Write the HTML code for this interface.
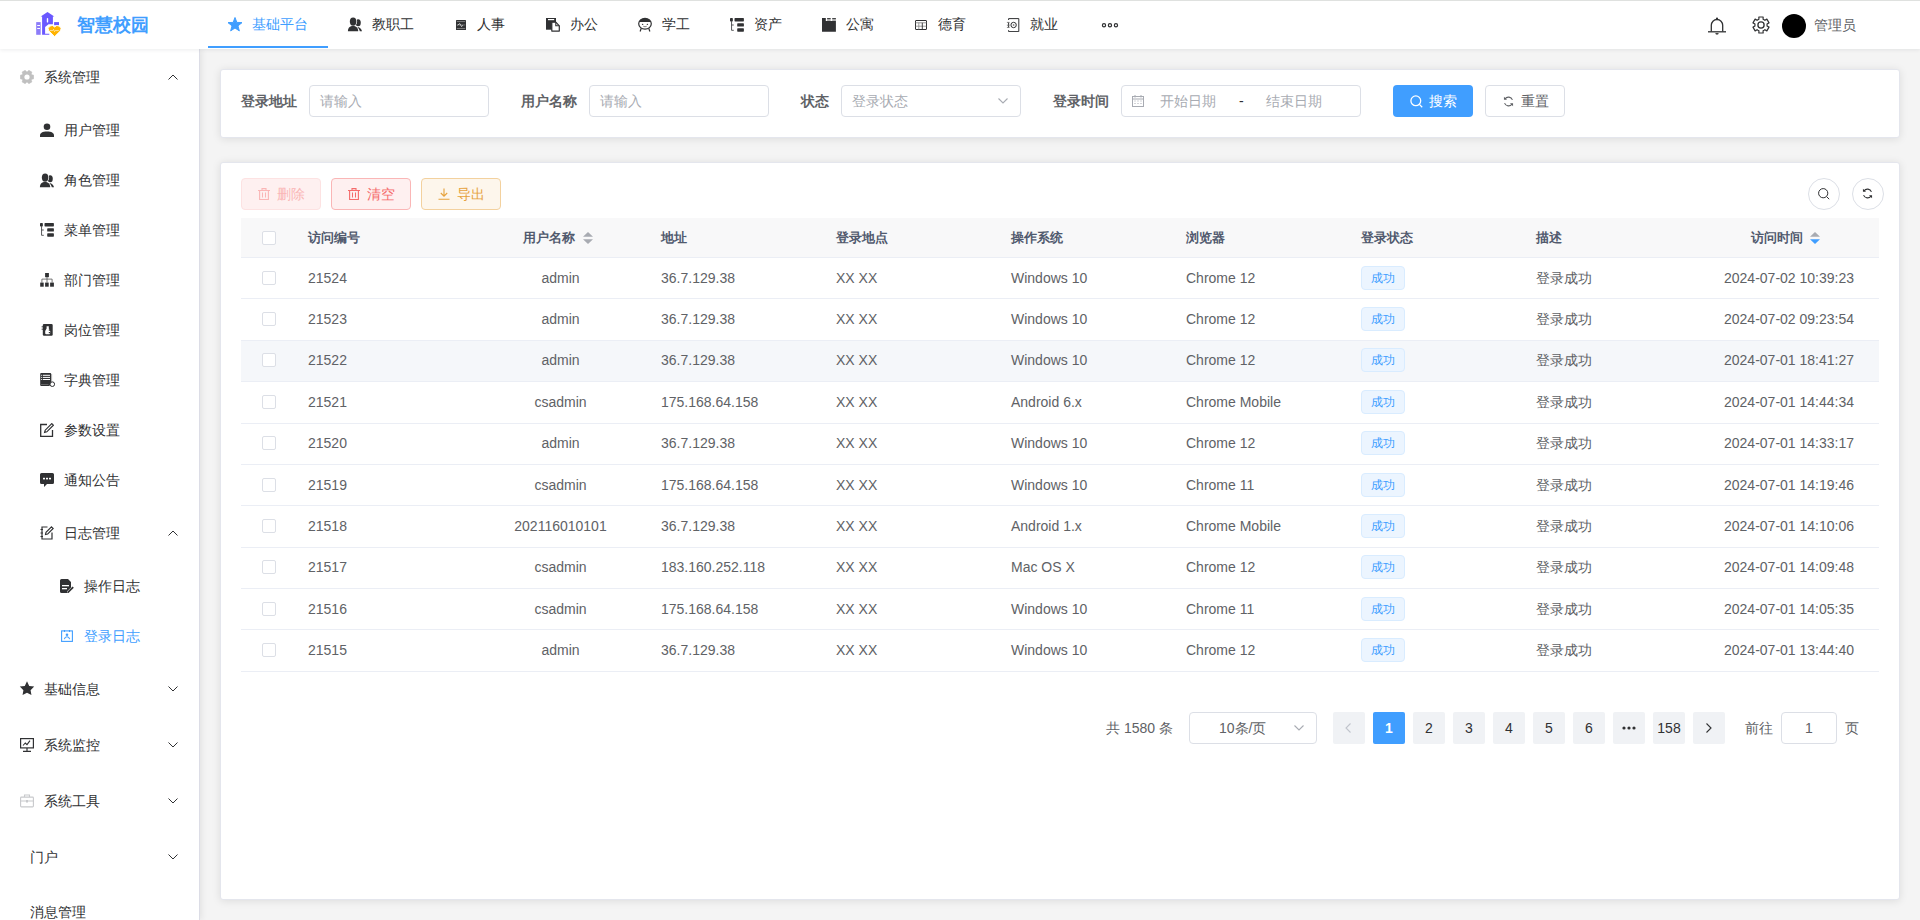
<!DOCTYPE html>
<html><head><meta charset="utf-8">
<style>
*{box-sizing:border-box;margin:0;padding:0}
html,body{width:1920px;height:920px;overflow:hidden}
body{font-family:"Liberation Sans",sans-serif;font-size:14px;color:#606266;background:#f4f4f4;position:relative}
svg{position:absolute;display:block}
#header{position:absolute;left:0;top:0;width:1920px;height:49px;background:#fff;box-shadow:0 1px 4px rgba(0,21,41,.08);z-index:3;border-top:1px solid #dfe1df}
#sidebar{position:absolute;left:0;top:49px;width:200px;height:871px;background:#fff;z-index:2;border-right:1px solid #dcdde6;box-shadow:2px 0 6px rgba(0,0,0,.07)}
.card{position:absolute;background:#fff;border-radius:4px;box-shadow:0 0 8px rgba(0,0,0,.10)}
.t{position:absolute;white-space:nowrap;line-height:14px;height:14px}
.nav{color:#303133}
.sb{color:#303133}
</style></head><body>
<div id="header">
  <!-- logo -->
  <svg style="left:32px;top:7px" width="32" height="32" viewBox="0 0 32 32">
    <rect x="4.2" y="14.1" width="4.5" height="12.7" fill="#8c7cf9"/>
    <rect x="5.2" y="17" width="2.8" height="1" fill="#fff"/><rect x="5.2" y="20" width="2.8" height="1" fill="#fff"/>
    <path d="M10.1 26.8V8.5H8.7L15.5 4l6.8 4.5h-1.4v7.8h-4.3l-3.5 2.7v6.7h4.2v1.1z" fill="#6a58ff"/>
    <rect x="14.8" y="10" width="1.4" height="4.6" rx=".7" fill="#fff"/>
    <rect x="22.1" y="14.1" width="4.9" height="3.1" fill="#6a58ff"/>
    <path d="M22.6 28.6l-5.6-5.5a3.3 3.3 0 0 1 5.6-4.1a3.3 3.3 0 0 1 5.6 4.1z" fill="#ffb300" stroke="#fff" stroke-width=".9"/>
    <path d="M18 22.6h2.6l.9-1.2 1 2.2.8-1h3.5" stroke="#fff" stroke-width=".6" fill="none"/>
  </svg>
  <div class="t" style="left:77px;top:15px;font-size:18px;line-height:18px;height:18px;font-weight:bold;color:#409eff">智慧校园</div>
  <!-- nav -->
  <div style="position:absolute;left:208px;top:45px;width:120px;height:2px;background:#409eff"></div>
  <svg style="left:228px;top:16px" width="14" height="15" viewBox="0 0 14 15"><path d="M7.00 0.50L8.83 5.39L14.04 5.61L9.96 8.86L11.35 13.89L7.00 11.01L2.65 13.89L4.04 8.86L-0.04 5.61L5.17 5.39z" fill="#409eff" stroke="#409eff" stroke-width="1" stroke-linejoin="round"/></svg>
  <div class="t" style="left:252px;top:16px;color:#409eff">基础平台</div>
  <svg style="left:348px;top:15.5px" width="15" height="15" viewBox="0 0 15 15" overflow="visible"><ellipse cx="10.2" cy="5.8" rx="2.6" ry="3.5" fill="#303133"/><path d="M9.6 9.9c2.4.4 4 1.9 4.4 4.3h-2.2c-.4-1.7-1.3-2.9-2.6-3.4z" fill="#303133"/><ellipse cx="5.1" cy="4.6" rx="4" ry="4.9" fill="#fff"/><path d="M-.9 14.6C-.9 10.6 1.8 8.5 5 8.5s6.1 2.1 6.1 6.1z" fill="#fff"/><ellipse cx="5.1" cy="4.6" rx="3.25" ry="4.2" fill="#303133"/><path d="M-.1 14.2C-.1 11 2 9.1 5 9.1s5.2 1.9 5.2 5.1z" fill="#303133"/></svg>
  <div class="t nav" style="left:372px;top:16px">教职工</div>
  <svg style="left:456px;top:18.8px" width="10" height="10" viewBox="0 0 10 10"><rect x="0" y="0" width="10" height="10" rx=".6" fill="#303133"/><rect x=".8" y="1.3" width="8.4" height=".6" fill="#aaa"/><rect x=".8" y="8.1" width="8.4" height=".6" fill="#aaa"/><rect x=".8" y="4.6" width="8.4" height=".7" fill="#888"/><path d="M1.5 5.2L3.8 3.6l1.8 3 1.3-1.4" fill="none" stroke="#fff" stroke-width=".7"/></svg>
  <div class="t nav" style="left:477px;top:16px">人事</div>
  <svg style="left:546px;top:16px" width="15" height="15" viewBox="0 0 15 15"><rect x="0" y="1" width="10" height="11.7" fill="#303133"/><rect x="2" y="2" width="6.2" height="1.2" fill="#fff"/><path d="M5.8 5.2h4l3.5 3.6v5.3H5.8z" fill="#fff" stroke="#303133" stroke-width="1.2" stroke-linejoin="round"/><path d="M9.8 5.2v3.6h3.5" fill="none" stroke="#303133" stroke-width="1.1"/></svg>
  <div class="t nav" style="left:570px;top:16px">办公</div>
  <svg style="left:638px;top:16px" width="14" height="15" viewBox="0 0 14 15"><ellipse cx="7" cy="6.8" rx="6.3" ry="5.4" fill="none" stroke="#303133" stroke-width="1.2"/><path d="M1 5.1C1.9 2.4 4.3 1.4 7 1.4s5.1 1 6 3.7z" fill="#303133"/><ellipse cx="4.6" cy="7.3" rx=".75" ry=".6" fill="#303133"/><ellipse cx="9.4" cy="7.3" rx=".75" ry=".6" fill="#303133"/><path d="M5.3 9.3q1.7 .9 3.4 0" fill="none" stroke="#777" stroke-width=".9"/><path d="M3.3 11.3L2.1 14.5M10.7 11.3l1.2 3.2" stroke="#303133" stroke-width="1.2"/></svg>
  <div class="t nav" style="left:662px;top:16px">学工</div>
  <svg style="left:730px;top:16px" width="14" height="15" viewBox="0 0 14 15"><rect x="0" y="1" width="2.85" height="3.4" rx=".7" fill="#303133"/><path d="M1.55 4.2v9.1H3.8M1.55 8h2.2" fill="none" stroke="#303133" stroke-width=".8"/><rect x="4.5" y="1.1" width="9.4" height="3.3" rx=".6" fill="#303133"/><rect x="7.2" y="6.3" width="6.7" height="3.3" rx=".6" fill="#303133"/><rect x="7.2" y="11.3" width="6.7" height="3.4" rx=".6" fill="#303133"/></svg>
  <div class="t nav" style="left:754px;top:16px">资产</div>
  <svg style="left:822px;top:16px" width="14" height="15" viewBox="0 0 14 15"><path d="M0 1.1H3.8V4.1H13.9V14.7H0z" fill="#303133"/><rect x="5.1" y="1.1" width="3.6" height=".9" fill="#303133"/><rect x="10.2" y="1.1" width="3.7" height=".9" fill="#303133"/><rect x="5.1" y="2" width="3.6" height="1.9" fill="#aaa"/><rect x="10.2" y="2" width="3.7" height="1.9" fill="#aaa"/></svg>
  <div class="t nav" style="left:846px;top:16px">公寓</div>
  <svg style="left:915px;top:18.8px" width="12" height="10" viewBox="0 0 12 10"><rect x=".5" y=".5" width="11" height="9" rx=".4" fill="none" stroke="#303133" stroke-width="1"/><path d="M.5 2.8h11" stroke="#888" stroke-width=".9"/><path d="M.5 6.2h11" stroke="#777" stroke-width=".7"/><path d="M3.8 2.8v6.7" stroke="#888" stroke-width=".8"/><path d="M7.3 2.8v6.7" stroke="#303133" stroke-width=".9"/></svg>
  <div class="t nav" style="left:938px;top:16px">德育</div>
  <svg style="left:1006px;top:16px" width="14" height="15" viewBox="0 0 14 15"><path d="M2.6 3V1.6h10.2v13H2.6v-1.4M2.6 5.5v5" fill="none" stroke="#303133" stroke-width="1"/><path d="M.9 5.4h2.7M.9 8.2h2.7M.9 10.4h2.7" stroke="#666" stroke-width=".8"/><circle cx="7.6" cy="8" r="2.7" fill="none" stroke="#303133" stroke-width="1"/><circle cx="7.6" cy="8" r=".9" fill="#888"/></svg>
  <div class="t nav" style="left:1030px;top:16px">就业</div>
  <svg style="left:1101px;top:21px" width="18" height="6" viewBox="0 0 18 6"><circle cx="3" cy="3.2" r="1.6" fill="none" stroke="#303133" stroke-width="1.2"/><circle cx="8.95" cy="3.2" r="1.6" fill="none" stroke="#303133" stroke-width="1.2"/><circle cx="14.95" cy="3.2" r="1.6" fill="none" stroke="#303133" stroke-width="1.2"/></svg>
  <!-- right -->
  <svg style="left:1708px;top:15px" width="18" height="20" viewBox="0 0 18 20"><path d="M3.3 15.5V9.2a5.7 5.7 0 0 1 11.4 0v6.3" fill="none" stroke="#303133" stroke-width="1.3"/><path d="M0 15.8h18" stroke="#303133" stroke-width="1.3"/><circle cx="9" cy="2.6" r="1.1" fill="#303133"/><path d="M7.3 17h3.4a1.7 1.7 0 0 1-3.4 0z" fill="#444"/></svg>
  <svg style="left:1752px;top:15px" width="18" height="18" viewBox="0 0 18 18"><path d="M5.95 3.72L6.91 3.27L6.85 0.98L11.15 0.98L11.09 3.27L12.05 3.72L12.92 4.33L14.87 3.13L17.02 6.85L15.01 7.94L15.10 9.00L15.01 10.06L17.02 11.15L14.87 14.87L12.92 13.67L12.05 14.28L11.09 14.73L11.15 17.02L6.85 17.02L6.91 14.73L5.95 14.28L5.08 13.67L3.13 14.87L0.98 11.15L2.99 10.06L2.90 9.00L2.99 7.94L0.98 6.85L3.13 3.13L5.08 4.33z" fill="none" stroke="#303133" stroke-width="1.2" stroke-linejoin="round"/><circle cx="9" cy="9" r="3.1" fill="none" stroke="#303133" stroke-width="1.3"/></svg>
  <div style="position:absolute;left:1782px;top:13px;width:24px;height:24px;border-radius:50%;background:#000"></div>
  <div class="t" style="left:1814px;top:17px;color:#606266">管理员</div>
</div>
<div id="sidebar">
<svg style="left:20px;top:21px" width="14" height="14" viewBox="0 0 14 14"><path d="M11.59 4.35L11.84 4.84L13.66 5.21L13.66 8.79L11.84 9.16L11.59 9.65L11.29 10.12L11.88 11.88L8.79 13.66L7.55 12.27L7.00 12.30L6.45 12.27L5.21 13.66L2.12 11.88L2.71 10.12L2.41 9.65L2.16 9.16L0.34 8.79L0.34 5.21L2.16 4.84L2.41 4.35L2.71 3.88L2.12 2.12L5.21 0.34L6.45 1.73L7.00 1.70L7.55 1.73L8.79 0.34L11.88 2.12L11.29 3.88z" fill="#c0c0c0" stroke="#c0c0c0" stroke-width=".6" stroke-linejoin="round"/><circle cx="7" cy="7" r="2.6" fill="#fff"/></svg>
<div class="t" style="left:44px;top:21.0px;font-size:14px;line-height:14px;height:14px;color:#303133">系统管理</div>
<svg style="left:168px;top:25px" width="10" height="6" viewBox="0 0 10 6"><path d="M.5 5.5L5 1l4.5 4.5" fill="none" stroke="#303133" stroke-width="1"/></svg>
<svg style="left:40px;top:74px" width="14" height="14" viewBox="0 0 14 14" fill="#303133"><circle cx="7" cy="3.8" r="3.3"/><path d="M0 14v-1.5C0 10 2.5 8.5 7 8.5s7 1.5 7 4V14z"/></svg>
<div class="t" style="left:64px;top:74.0px;font-size:14px;line-height:14px;height:14px;color:#303133">用户管理</div>
<svg style="left:40px;top:124px" width="15" height="15" viewBox="0 0 15 15" overflow="visible"><ellipse cx="10.2" cy="5.8" rx="2.6" ry="3.5" fill="#303133"/><path d="M9.6 9.9c2.4.4 4 1.9 4.4 4.3h-2.2c-.4-1.7-1.3-2.9-2.6-3.4z" fill="#303133"/><ellipse cx="5.1" cy="4.6" rx="4" ry="4.9" fill="#fff"/><path d="M-.9 14.6C-.9 10.6 1.8 8.5 5 8.5s6.1 2.1 6.1 6.1z" fill="#fff"/><ellipse cx="5.1" cy="4.6" rx="3.25" ry="4.2" fill="#303133"/><path d="M-.1 14.2C-.1 11 2 9.1 5 9.1s5.2 1.9 5.2 5.1z" fill="#303133"/></svg>
<div class="t" style="left:64px;top:124.0px;font-size:14px;line-height:14px;height:14px;color:#303133">角色管理</div>
<svg style="left:40px;top:173px" width="14" height="15" viewBox="0 0 14 15"><rect x="0" y="1" width="2.85" height="3.4" rx=".7" fill="#303133"/><path d="M1.55 4.2v9.1H3.8M1.55 8h2.2" fill="none" stroke="#303133" stroke-width=".8"/><rect x="4.5" y="1.1" width="9.4" height="3.3" rx=".6" fill="#303133"/><rect x="7.2" y="6.3" width="6.7" height="3.3" rx=".6" fill="#303133"/><rect x="7.2" y="11.3" width="6.7" height="3.4" rx=".6" fill="#303133"/></svg>
<div class="t" style="left:64px;top:174.0px;font-size:14px;line-height:14px;height:14px;color:#303133">菜单管理</div>
<svg style="left:40px;top:224px" width="14" height="14" viewBox="0 0 14 14"><rect x="5.1" y="0" width="3.8" height="4.2" fill="#303133"/><path d="M7 4v2.1M1.9 9.6V6.1h10.2v3.5M7 6.1v3.5" fill="none" stroke="#555" stroke-width=".8"/><rect x="0.2" y="9.6" width="3.5" height="4.1" fill="#303133"/><rect x="5.1" y="9.6" width="3.6" height="4.1" fill="#303133"/><rect x="10.1" y="9.6" width="3.8" height="4.1" fill="#303133"/></svg>
<div class="t" style="left:64px;top:224.0px;font-size:14px;line-height:14px;height:14px;color:#303133">部门管理</div>
<svg style="left:40px;top:274px" width="14" height="14" viewBox="0 0 14 14"><rect x="2.8" y=".9" width="9.9" height="11.9" rx="1.2" fill="#303133"/><path d="M1.6 3.8h1.8M1.6 6.2h1.8" stroke="#303133" stroke-width=".9"/><path d="M6.6 3.2h2.2v2.4l1.4 2.4v2.2a1 1 0 0 1-1 1H6.2a1 1 0 0 1-1-1V8l1.4-2.4z" fill="#fff"/><path d="M8.8 6.5h1.4v1.2H8.8zM8.8 9h1.4v1.2H8.8z" fill="#303133"/></svg>
<div class="t" style="left:64px;top:274.0px;font-size:14px;line-height:14px;height:14px;color:#303133">岗位管理</div>
<svg style="left:40px;top:324px" width="15" height="14" viewBox="0 0 15 14"><path d="M.2 1a1 1 0 0 1 1-1h9a1 1 0 0 1 1 1v9.6a3 3 0 0 0-1.7 2.4H1.2a1 1 0 0 1-1-1z" fill="#303133"/><rect x="11.2" y="1" width=".9" height="8.5" fill="#aaa"/><rect x="1.2" y="1.8" width="1" height="1" fill="#fff"/><rect x="3" y="1.8" width="7" height="1" fill="#fff"/><rect x="1.2" y="3.9" width="1" height="1" fill="#fff"/><rect x="3" y="3.9" width="7" height="1" fill="#fff"/><rect x="1.2" y="6" width="1" height="1" fill="#fff"/><rect x="3" y="6" width="7" height="1" fill="#fff"/><rect x="1" y="11.4" width="7.5" height=".6" fill="#888"/><circle cx="12.3" cy="11.2" r="2.3" fill="#fff" stroke="#303133" stroke-width="1"/></svg>
<div class="t" style="left:64px;top:324.0px;font-size:14px;line-height:14px;height:14px;color:#303133">字典管理</div>
<svg style="left:40px;top:374px" width="14" height="14" viewBox="0 0 14 14" fill="#303133"><path d="M7 1.5H.7v11.8h11.8V7" fill="none" stroke="#303133" stroke-width="1.3"/><path d="M11.8.6l1.6 1.6-6.6 6.6-2.2.6.6-2.2z" fill="none" stroke="#303133" stroke-width="1.2"/></svg>
<div class="t" style="left:64px;top:374.0px;font-size:14px;line-height:14px;height:14px;color:#303133">参数设置</div>
<svg style="left:40px;top:424px" width="14" height="14" viewBox="0 0 14 14" fill="#303133"><path d="M0 1.5A1.5 1.5 0 0 1 1.5 0h11A1.5 1.5 0 0 1 14 1.5v8a1.5 1.5 0 0 1-1.5 1.5H7L4 14v-3H1.5A1.5 1.5 0 0 1 0 9.5z"/><rect x="3" y="4.8" width="2" height="1.6" fill="#fff"/><rect x="6" y="4.8" width="2" height="1.6" fill="#fff"/><rect x="9" y="4.8" width="2" height="1.6" fill="#fff"/></svg>
<div class="t" style="left:64px;top:424.0px;font-size:14px;line-height:14px;height:14px;color:#303133">通知公告</div>
<svg style="left:40px;top:477px" width="14" height="14" viewBox="0 0 14 14"><path d="M7.5 1H2v12h10V6.5" fill="none" stroke="#303133" stroke-width="1.2"/><path d="M0.5 3.5h2.5M.5 7h2.5M.5 10.5h2.5" stroke="#303133" stroke-width="1"/><path d="M11.5.8l1.7 1.7-5.5 5.5-2.2.5.5-2.2z" fill="none" stroke="#303133" stroke-width="1.1"/></svg>
<div class="t" style="left:64px;top:477.0px;font-size:14px;line-height:14px;height:14px;color:#303133">日志管理</div>
<svg style="left:168px;top:481px" width="10" height="6" viewBox="0 0 10 6"><path d="M.5 5.5L5 1l4.5 4.5" fill="none" stroke="#303133" stroke-width="1"/></svg>
<svg style="left:60px;top:530px" width="14" height="14" viewBox="0 0 14 14" fill="#303133"><path d="M0 1.5A1.5 1.5 0 0 1 1.5 0H8l3 3v5.5L7 12.5V14H1.5A1.5 1.5 0 0 1 0 12.5z"/><rect x="2" y="6" width="7" height="1.3" fill="#fff"/><rect x="2" y="9" width="5" height="1.3" fill="#fff"/><path d="M12.6 7.5l1.2 1.2-5.3 5.3H7.3v-1.2z"/></svg>
<div class="t" style="left:84px;top:530.0px;font-size:14px;line-height:14px;height:14px;color:#303133">操作日志</div>
<svg style="left:61px;top:581px" width="12" height="12" viewBox="0 0 12 12"><rect x=".6" y=".9" width="10.8" height="10.5" fill="none" stroke="#409eff" stroke-width="1.1"/><path d="M3.5 0v2M8.5 0v2" stroke="#409eff" stroke-width="1.1"/><circle cx="6" cy="4.8" r="1.3" fill="#409eff"/><path d="M3.3 9.2C3.8 7.5 4.8 6.8 6 6.8s2.2.7 2.7 2.4" fill="none" stroke="#409eff" stroke-width="1.1"/></svg>
<div class="t" style="left:84px;top:580.0px;font-size:14px;line-height:14px;height:14px;color:#409eff">登录日志</div>
<svg style="left:19px;top:632px" width="16" height="15" viewBox="0 0 24 23"><path d="M12 .5l3.4 7 7.6 1.1-5.5 5.4 1.3 7.6L12 18l-6.8 3.6 1.3-7.6L1 8.6l7.6-1.1z" fill="#303133"/></svg>
<div class="t" style="left:44px;top:633.0px;font-size:14px;line-height:14px;height:14px;color:#303133">基础信息</div>
<svg style="left:168px;top:637px" width="10" height="6" viewBox="0 0 10 6"><path d="M.5 .5L5 5l4.5-4.5" fill="none" stroke="#303133" stroke-width="1"/></svg>
<svg style="left:20px;top:689px" width="14" height="14" viewBox="0 0 14 14"><rect x=".6" y=".6" width="12.8" height="9.3" fill="none" stroke="#303133" stroke-width="1.2"/><path d="M7 10v3.5M3 13.4h8" stroke="#303133" stroke-width="1.2"/><path d="M3 7.5l2.3-2.5 1.7 1.7 3-4" fill="none" stroke="#303133" stroke-width="1.1"/></svg>
<div class="t" style="left:44px;top:689.0px;font-size:14px;line-height:14px;height:14px;color:#303133">系统监控</div>
<svg style="left:168px;top:693px" width="10" height="6" viewBox="0 0 10 6"><path d="M.5 .5L5 5l4.5-4.5" fill="none" stroke="#303133" stroke-width="1"/></svg>
<svg style="left:20px;top:745px" width="14" height="14" viewBox="0 0 14 14"><rect x=".6" y="3.1" width="12.8" height="9.8" rx=".8" fill="none" stroke="#c8c9cc" stroke-width="1.1"/><path d="M4.5 3V1h5v2M.6 7h12.8" fill="none" stroke="#c8c9cc" stroke-width="1.1"/><rect x="6" y="6" width="2" height="2.5" fill="#c8c9cc"/></svg>
<div class="t" style="left:44px;top:745.0px;font-size:14px;line-height:14px;height:14px;color:#303133">系统工具</div>
<svg style="left:168px;top:749px" width="10" height="6" viewBox="0 0 10 6"><path d="M.5 .5L5 5l4.5-4.5" fill="none" stroke="#303133" stroke-width="1"/></svg>
<div class="t" style="left:30px;top:801.0px;font-size:14px;line-height:14px;height:14px;color:#303133">门户</div>
<svg style="left:168px;top:805px" width="10" height="6" viewBox="0 0 10 6"><path d="M.5 .5L5 5l4.5-4.5" fill="none" stroke="#303133" stroke-width="1"/></svg>
<div class="t" style="left:30px;top:856.0px;font-size:14px;line-height:14px;height:14px;color:#303133">消息管理</div>
</div>
<div style="position:absolute;left:220px;top:69px;width:1680px;height:69px;background:#fff;border:1px solid #e4e6ed;border-radius:3px;box-shadow:0 1px 9px rgba(0,0,0,.1)"></div>
<div class="t" style="left:241px;top:94.0px;font-size:14px;line-height:14px;height:14px;color:#606266;font-weight:bold">登录地址</div>
<div style="position:absolute;left:309px;top:85px;width:180px;height:32px;border:1px solid #dcdfe6;border-radius:4px;background:#fff"></div>
<div class="t" style="left:320px;top:94.0px;font-size:14px;line-height:14px;height:14px;color:#a8abb2">请输入</div>
<div class="t" style="left:521px;top:94.0px;font-size:14px;line-height:14px;height:14px;color:#606266;font-weight:bold">用户名称</div>
<div style="position:absolute;left:589px;top:85px;width:180px;height:32px;border:1px solid #dcdfe6;border-radius:4px;background:#fff"></div>
<div class="t" style="left:600px;top:94.0px;font-size:14px;line-height:14px;height:14px;color:#a8abb2">请输入</div>
<div class="t" style="left:801px;top:94.0px;font-size:14px;line-height:14px;height:14px;color:#606266;font-weight:bold">状态</div>
<div style="position:absolute;left:841px;top:85px;width:180px;height:32px;border:1px solid #dcdfe6;border-radius:4px;background:#fff"></div>
<div class="t" style="left:852px;top:94.0px;font-size:14px;line-height:14px;height:14px;color:#a8abb2">登录状态</div>
<svg style="left:998px;top:98px" width="10" height="6" viewBox="0 0 10 6"><path d="M.5 .5L5 5l4.5-4.5" fill="none" stroke="#a8abb2" stroke-width="1.1"/></svg>
<div class="t" style="left:1053px;top:94.0px;font-size:14px;line-height:14px;height:14px;color:#606266;font-weight:bold">登录时间</div>
<div style="position:absolute;left:1121px;top:85px;width:240px;height:32px;border:1px solid #dcdfe6;border-radius:4px;background:#fff"></div>
<svg style="left:1132px;top:95px" width="12" height="12" viewBox="0 0 12 12"><rect x=".5" y="1.5" width="11" height="10" fill="none" stroke="#a8abb2" stroke-width="1"/><path d="M.5 4h11" stroke="#a8abb2"/><path d="M3 0v2.5M9 0v2.5" stroke="#a8abb2"/><path d="M2.5 6h1M5.5 6h1M8.5 6h1M2.5 8.5h1M5.5 8.5h1M8.5 8.5h1" stroke="#a8abb2"/></svg>
<div class="t" style="left:1160px;top:94.0px;font-size:14px;line-height:14px;height:14px;color:#a8abb2">开始日期</div>
<div class="t" style="left:1239px;top:94.0px;font-size:14px;line-height:14px;height:14px;color:#303133">-</div>
<div class="t" style="left:1266px;top:94.0px;font-size:14px;line-height:14px;height:14px;color:#a8abb2">结束日期</div>
<div style="position:absolute;left:1393px;top:85px;width:80px;height:32px;background:#409eff;border-radius:4px"></div>
<svg style="left:1410px;top:95px" width="13" height="13" viewBox="0 0 13 13"><circle cx="5.8" cy="5.8" r="4.9" fill="none" stroke="#fff" stroke-width="1.3"/><path d="M9.4 9.4l2.8 2.8" stroke="#fff" stroke-width="1.3"/></svg>
<div class="t" style="left:1429px;top:94.0px;font-size:14px;line-height:14px;height:14px;color:#fff">搜索</div>
<div style="position:absolute;left:1485px;top:85px;width:80px;height:32px;border:1px solid #dcdfe6;border-radius:4px;background:#fff"></div>
<svg style="left:1503px;top:96px" width="11" height="11" viewBox="0 0 12 12"><path d="M10.3 4.2A4.6 4.6 0 0 0 2.2 3.2" fill="none" stroke="#606266" stroke-width="1.2"/><path d="M1.7 7.8A4.6 4.6 0 0 0 9.8 8.8" fill="none" stroke="#606266" stroke-width="1.2"/><path d="M1 .8v3.4h3.4z" fill="#606266"/><path d="M11 11.2V7.8H7.6z" fill="#606266"/></svg>
<div class="t" style="left:1521px;top:94.0px;font-size:14px;line-height:14px;height:14px;color:#606266">重置</div>
<div style="position:absolute;left:220px;top:162px;width:1680px;height:738px;background:#fff;border:1px solid #e4e6ed;border-radius:3px;box-shadow:0 1px 9px rgba(0,0,0,.1)"></div>
<div style="position:absolute;left:241px;top:178px;width:80px;height:32px;background:#fef0f0;border:1px solid #fde2e2;border-radius:4px"></div>
<svg style="left:258px;top:188px" width="12" height="12" viewBox="0 0 12 12"><path d="M0 2.5h12M4 2.5V.6h4v1.9" fill="none" stroke="#fab6b6" stroke-width="1.1"/><path d="M1.6 2.5v9h8.8v-9" fill="none" stroke="#fab6b6" stroke-width="1.1"/><path d="M4.5 4.5v5M7.5 4.5v5" stroke="#fab6b6" stroke-width="1"/></svg>
<div class="t" style="left:277px;top:187.0px;font-size:14px;line-height:14px;height:14px;color:#fab6b6">删除</div>
<div style="position:absolute;left:331px;top:178px;width:80px;height:32px;background:#fef0f0;border:1px solid #fab6b6;border-radius:4px"></div>
<svg style="left:348px;top:188px" width="12" height="12" viewBox="0 0 12 12"><path d="M0 2.5h12M4 2.5V.6h4v1.9" fill="none" stroke="#f56c6c" stroke-width="1.1"/><path d="M1.6 2.5v9h8.8v-9" fill="none" stroke="#f56c6c" stroke-width="1.1"/><path d="M4.5 4.5v5M7.5 4.5v5" stroke="#f56c6c" stroke-width="1"/></svg>
<div class="t" style="left:367px;top:187.0px;font-size:14px;line-height:14px;height:14px;color:#f56c6c">清空</div>
<div style="position:absolute;left:421px;top:178px;width:80px;height:32px;background:#fdf6ec;border:1px solid #f3d19e;border-radius:4px"></div>
<svg style="left:438px;top:188px" width="12" height="12" viewBox="0 0 12 12"><path d="M6 .5v7.5M2.8 5l3.2 3.2L9.2 5M.5 11.2h11" fill="none" stroke="#e6a23c" stroke-width="1.1"/></svg>
<div class="t" style="left:457px;top:187.0px;font-size:14px;line-height:14px;height:14px;color:#e6a23c">导出</div>
<div style="position:absolute;left:1808px;top:178px;width:32px;height:32px;border:1px solid #dcdfe6;border-radius:50%;background:#fff"></div>
<svg style="left:1818px;top:188px" width="12" height="12" viewBox="0 0 12 12"><circle cx="5.2" cy="5.2" r="4.6" fill="none" stroke="#303133" stroke-width="1"/><path d="M8.6 8.6l2.6 2.6" stroke="#303133" stroke-width="1"/></svg>
<div style="position:absolute;left:1852px;top:178px;width:32px;height:32px;border:1px solid #dcdfe6;border-radius:50%;background:#fff"></div>
<svg style="left:1862px;top:188px" width="11" height="11" viewBox="0 0 12 12"><path d="M10.3 4.2A4.6 4.6 0 0 0 2.2 3.2" fill="none" stroke="#303133" stroke-width="1.2"/><path d="M1.7 7.8A4.6 4.6 0 0 0 9.8 8.8" fill="none" stroke="#303133" stroke-width="1.2"/><path d="M1 .8v3.4h3.4z" fill="#303133"/><path d="M11 11.2V7.8H7.6z" fill="#303133"/></svg>
<div style="position:absolute;left:241px;top:218px;width:1638px;height:40px;background:#f8f8f9;border-bottom:1px solid #ebeef5"></div>
<div style="position:absolute;left:262px;top:231px;width:14px;height:14px;border:1px solid #dcdfe6;border-radius:2px;background:#fff"></div>
<div class="t" style="left:308px;top:231.0px;font-size:13px;line-height:13px;height:13px;color:#515a6e;font-weight:bold">访问编号</div>
<div class="t" style="left:523px;top:231.0px;font-size:13px;line-height:13px;height:13px;color:#515a6e;font-weight:bold">用户名称</div>
<svg style="left:583px;top:232px" width="10" height="12" viewBox="0 0 10 12"><path d="M0 4.7L5 0l5 4.7z" fill="#a8abb2"/><path d="M0 7.3L5 12l5-4.7z" fill="#a8abb2"/></svg>
<div class="t" style="left:661px;top:231.0px;font-size:13px;line-height:13px;height:13px;color:#515a6e;font-weight:bold">地址</div>
<div class="t" style="left:836px;top:231.0px;font-size:13px;line-height:13px;height:13px;color:#515a6e;font-weight:bold">登录地点</div>
<div class="t" style="left:1011px;top:231.0px;font-size:13px;line-height:13px;height:13px;color:#515a6e;font-weight:bold">操作系统</div>
<div class="t" style="left:1186px;top:231.0px;font-size:13px;line-height:13px;height:13px;color:#515a6e;font-weight:bold">浏览器</div>
<div class="t" style="left:1361px;top:231.0px;font-size:13px;line-height:13px;height:13px;color:#515a6e;font-weight:bold">登录状态</div>
<div class="t" style="left:1536px;top:231.0px;font-size:13px;line-height:13px;height:13px;color:#515a6e;font-weight:bold">描述</div>
<div class="t" style="left:1751px;top:231.0px;font-size:13px;line-height:13px;height:13px;color:#515a6e;font-weight:bold">访问时间</div>
<svg style="left:1810px;top:232px" width="10" height="12" viewBox="0 0 10 12"><path d="M0 4.7L5 0l5 4.7z" fill="#a8abb2"/><path d="M0 7.3L5 12l5-4.7z" fill="#409eff"/></svg>
<div style="position:absolute;left:241px;top:258.0px;width:1638px;height:41.38px;background:#fff;border-bottom:1px solid #ebeef5"></div>
<div style="position:absolute;left:262px;top:271px;width:14px;height:14px;border:1px solid #dcdfe6;border-radius:2px;background:#fff"></div>
<div class="t" style="left:308px;top:271.0px;font-size:14px;line-height:14px;height:14px;color:#606266">21524</div>
<div class="t" style="left:460.5px;top:271.0px;font-size:14px;line-height:14px;height:14px;color:#606266;width:200px;text-align:center">admin</div>
<div class="t" style="left:661px;top:271.0px;font-size:14px;line-height:14px;height:14px;color:#606266">36.7.129.38</div>
<div class="t" style="left:836px;top:271.0px;font-size:14px;line-height:14px;height:14px;color:#606266">XX XX</div>
<div class="t" style="left:1011px;top:271.0px;font-size:14px;line-height:14px;height:14px;color:#606266">Windows 10</div>
<div class="t" style="left:1186px;top:271.0px;font-size:14px;line-height:14px;height:14px;color:#606266">Chrome 12</div>
<div style="position:absolute;left:1361px;top:266px;width:44px;height:24px;background:#ecf5ff;border:1px solid #d9ecff;border-radius:4px"></div>
<div class="t" style="left:1361.0px;top:272.0px;font-size:12px;line-height:12px;height:12px;color:#409eff;width:44px;text-align:center">成功</div>
<div class="t" style="left:1536px;top:271.0px;font-size:14px;line-height:14px;height:14px;color:#606266">登录成功</div>
<div class="t" style="left:1689.0px;top:271.0px;font-size:14px;line-height:14px;height:14px;color:#606266;width:200px;text-align:center">2024-07-02 10:39:23</div>
<div style="position:absolute;left:241px;top:299.38px;width:1638px;height:41.38px;background:#fff;border-bottom:1px solid #ebeef5"></div>
<div style="position:absolute;left:262px;top:312px;width:14px;height:14px;border:1px solid #dcdfe6;border-radius:2px;background:#fff"></div>
<div class="t" style="left:308px;top:312.0px;font-size:14px;line-height:14px;height:14px;color:#606266">21523</div>
<div class="t" style="left:460.5px;top:312.0px;font-size:14px;line-height:14px;height:14px;color:#606266;width:200px;text-align:center">admin</div>
<div class="t" style="left:661px;top:312.0px;font-size:14px;line-height:14px;height:14px;color:#606266">36.7.129.38</div>
<div class="t" style="left:836px;top:312.0px;font-size:14px;line-height:14px;height:14px;color:#606266">XX XX</div>
<div class="t" style="left:1011px;top:312.0px;font-size:14px;line-height:14px;height:14px;color:#606266">Windows 10</div>
<div class="t" style="left:1186px;top:312.0px;font-size:14px;line-height:14px;height:14px;color:#606266">Chrome 12</div>
<div style="position:absolute;left:1361px;top:307px;width:44px;height:24px;background:#ecf5ff;border:1px solid #d9ecff;border-radius:4px"></div>
<div class="t" style="left:1361.0px;top:313.0px;font-size:12px;line-height:12px;height:12px;color:#409eff;width:44px;text-align:center">成功</div>
<div class="t" style="left:1536px;top:312.0px;font-size:14px;line-height:14px;height:14px;color:#606266">登录成功</div>
<div class="t" style="left:1689.0px;top:312.0px;font-size:14px;line-height:14px;height:14px;color:#606266;width:200px;text-align:center">2024-07-02 09:23:54</div>
<div style="position:absolute;left:241px;top:340.76px;width:1638px;height:41.38px;background:#f5f7fa;border-bottom:1px solid #ebeef5"></div>
<div style="position:absolute;left:262px;top:353px;width:14px;height:14px;border:1px solid #dcdfe6;border-radius:2px;background:#fff"></div>
<div class="t" style="left:308px;top:353.0px;font-size:14px;line-height:14px;height:14px;color:#606266">21522</div>
<div class="t" style="left:460.5px;top:353.0px;font-size:14px;line-height:14px;height:14px;color:#606266;width:200px;text-align:center">admin</div>
<div class="t" style="left:661px;top:353.0px;font-size:14px;line-height:14px;height:14px;color:#606266">36.7.129.38</div>
<div class="t" style="left:836px;top:353.0px;font-size:14px;line-height:14px;height:14px;color:#606266">XX XX</div>
<div class="t" style="left:1011px;top:353.0px;font-size:14px;line-height:14px;height:14px;color:#606266">Windows 10</div>
<div class="t" style="left:1186px;top:353.0px;font-size:14px;line-height:14px;height:14px;color:#606266">Chrome 12</div>
<div style="position:absolute;left:1361px;top:348px;width:44px;height:24px;background:#ecf5ff;border:1px solid #d9ecff;border-radius:4px"></div>
<div class="t" style="left:1361.0px;top:354.0px;font-size:12px;line-height:12px;height:12px;color:#409eff;width:44px;text-align:center">成功</div>
<div class="t" style="left:1536px;top:353.0px;font-size:14px;line-height:14px;height:14px;color:#606266">登录成功</div>
<div class="t" style="left:1689.0px;top:353.0px;font-size:14px;line-height:14px;height:14px;color:#606266;width:200px;text-align:center">2024-07-01 18:41:27</div>
<div style="position:absolute;left:241px;top:382.14px;width:1638px;height:41.38px;background:#fff;border-bottom:1px solid #ebeef5"></div>
<div style="position:absolute;left:262px;top:395px;width:14px;height:14px;border:1px solid #dcdfe6;border-radius:2px;background:#fff"></div>
<div class="t" style="left:308px;top:395.0px;font-size:14px;line-height:14px;height:14px;color:#606266">21521</div>
<div class="t" style="left:460.5px;top:395.0px;font-size:14px;line-height:14px;height:14px;color:#606266;width:200px;text-align:center">csadmin</div>
<div class="t" style="left:661px;top:395.0px;font-size:14px;line-height:14px;height:14px;color:#606266">175.168.64.158</div>
<div class="t" style="left:836px;top:395.0px;font-size:14px;line-height:14px;height:14px;color:#606266">XX XX</div>
<div class="t" style="left:1011px;top:395.0px;font-size:14px;line-height:14px;height:14px;color:#606266">Android 6.x</div>
<div class="t" style="left:1186px;top:395.0px;font-size:14px;line-height:14px;height:14px;color:#606266">Chrome Mobile</div>
<div style="position:absolute;left:1361px;top:390px;width:44px;height:24px;background:#ecf5ff;border:1px solid #d9ecff;border-radius:4px"></div>
<div class="t" style="left:1361.0px;top:396.0px;font-size:12px;line-height:12px;height:12px;color:#409eff;width:44px;text-align:center">成功</div>
<div class="t" style="left:1536px;top:395.0px;font-size:14px;line-height:14px;height:14px;color:#606266">登录成功</div>
<div class="t" style="left:1689.0px;top:395.0px;font-size:14px;line-height:14px;height:14px;color:#606266;width:200px;text-align:center">2024-07-01 14:44:34</div>
<div style="position:absolute;left:241px;top:423.52px;width:1638px;height:41.38px;background:#fff;border-bottom:1px solid #ebeef5"></div>
<div style="position:absolute;left:262px;top:436px;width:14px;height:14px;border:1px solid #dcdfe6;border-radius:2px;background:#fff"></div>
<div class="t" style="left:308px;top:436.0px;font-size:14px;line-height:14px;height:14px;color:#606266">21520</div>
<div class="t" style="left:460.5px;top:436.0px;font-size:14px;line-height:14px;height:14px;color:#606266;width:200px;text-align:center">admin</div>
<div class="t" style="left:661px;top:436.0px;font-size:14px;line-height:14px;height:14px;color:#606266">36.7.129.38</div>
<div class="t" style="left:836px;top:436.0px;font-size:14px;line-height:14px;height:14px;color:#606266">XX XX</div>
<div class="t" style="left:1011px;top:436.0px;font-size:14px;line-height:14px;height:14px;color:#606266">Windows 10</div>
<div class="t" style="left:1186px;top:436.0px;font-size:14px;line-height:14px;height:14px;color:#606266">Chrome 12</div>
<div style="position:absolute;left:1361px;top:431px;width:44px;height:24px;background:#ecf5ff;border:1px solid #d9ecff;border-radius:4px"></div>
<div class="t" style="left:1361.0px;top:437.0px;font-size:12px;line-height:12px;height:12px;color:#409eff;width:44px;text-align:center">成功</div>
<div class="t" style="left:1536px;top:436.0px;font-size:14px;line-height:14px;height:14px;color:#606266">登录成功</div>
<div class="t" style="left:1689.0px;top:436.0px;font-size:14px;line-height:14px;height:14px;color:#606266;width:200px;text-align:center">2024-07-01 14:33:17</div>
<div style="position:absolute;left:241px;top:464.9px;width:1638px;height:41.38px;background:#fff;border-bottom:1px solid #ebeef5"></div>
<div style="position:absolute;left:262px;top:478px;width:14px;height:14px;border:1px solid #dcdfe6;border-radius:2px;background:#fff"></div>
<div class="t" style="left:308px;top:478.0px;font-size:14px;line-height:14px;height:14px;color:#606266">21519</div>
<div class="t" style="left:460.5px;top:478.0px;font-size:14px;line-height:14px;height:14px;color:#606266;width:200px;text-align:center">csadmin</div>
<div class="t" style="left:661px;top:478.0px;font-size:14px;line-height:14px;height:14px;color:#606266">175.168.64.158</div>
<div class="t" style="left:836px;top:478.0px;font-size:14px;line-height:14px;height:14px;color:#606266">XX XX</div>
<div class="t" style="left:1011px;top:478.0px;font-size:14px;line-height:14px;height:14px;color:#606266">Windows 10</div>
<div class="t" style="left:1186px;top:478.0px;font-size:14px;line-height:14px;height:14px;color:#606266">Chrome 11</div>
<div style="position:absolute;left:1361px;top:473px;width:44px;height:24px;background:#ecf5ff;border:1px solid #d9ecff;border-radius:4px"></div>
<div class="t" style="left:1361.0px;top:479.0px;font-size:12px;line-height:12px;height:12px;color:#409eff;width:44px;text-align:center">成功</div>
<div class="t" style="left:1536px;top:478.0px;font-size:14px;line-height:14px;height:14px;color:#606266">登录成功</div>
<div class="t" style="left:1689.0px;top:478.0px;font-size:14px;line-height:14px;height:14px;color:#606266;width:200px;text-align:center">2024-07-01 14:19:46</div>
<div style="position:absolute;left:241px;top:506.28px;width:1638px;height:41.38px;background:#fff;border-bottom:1px solid #ebeef5"></div>
<div style="position:absolute;left:262px;top:519px;width:14px;height:14px;border:1px solid #dcdfe6;border-radius:2px;background:#fff"></div>
<div class="t" style="left:308px;top:519.0px;font-size:14px;line-height:14px;height:14px;color:#606266">21518</div>
<div class="t" style="left:460.5px;top:519.0px;font-size:14px;line-height:14px;height:14px;color:#606266;width:200px;text-align:center">202116010101</div>
<div class="t" style="left:661px;top:519.0px;font-size:14px;line-height:14px;height:14px;color:#606266">36.7.129.38</div>
<div class="t" style="left:836px;top:519.0px;font-size:14px;line-height:14px;height:14px;color:#606266">XX XX</div>
<div class="t" style="left:1011px;top:519.0px;font-size:14px;line-height:14px;height:14px;color:#606266">Android 1.x</div>
<div class="t" style="left:1186px;top:519.0px;font-size:14px;line-height:14px;height:14px;color:#606266">Chrome Mobile</div>
<div style="position:absolute;left:1361px;top:514px;width:44px;height:24px;background:#ecf5ff;border:1px solid #d9ecff;border-radius:4px"></div>
<div class="t" style="left:1361.0px;top:520.0px;font-size:12px;line-height:12px;height:12px;color:#409eff;width:44px;text-align:center">成功</div>
<div class="t" style="left:1536px;top:519.0px;font-size:14px;line-height:14px;height:14px;color:#606266">登录成功</div>
<div class="t" style="left:1689.0px;top:519.0px;font-size:14px;line-height:14px;height:14px;color:#606266;width:200px;text-align:center">2024-07-01 14:10:06</div>
<div style="position:absolute;left:241px;top:547.66px;width:1638px;height:41.38px;background:#fff;border-bottom:1px solid #ebeef5"></div>
<div style="position:absolute;left:262px;top:560px;width:14px;height:14px;border:1px solid #dcdfe6;border-radius:2px;background:#fff"></div>
<div class="t" style="left:308px;top:560.0px;font-size:14px;line-height:14px;height:14px;color:#606266">21517</div>
<div class="t" style="left:460.5px;top:560.0px;font-size:14px;line-height:14px;height:14px;color:#606266;width:200px;text-align:center">csadmin</div>
<div class="t" style="left:661px;top:560.0px;font-size:14px;line-height:14px;height:14px;color:#606266">183.160.252.118</div>
<div class="t" style="left:836px;top:560.0px;font-size:14px;line-height:14px;height:14px;color:#606266">XX XX</div>
<div class="t" style="left:1011px;top:560.0px;font-size:14px;line-height:14px;height:14px;color:#606266">Mac OS X</div>
<div class="t" style="left:1186px;top:560.0px;font-size:14px;line-height:14px;height:14px;color:#606266">Chrome 12</div>
<div style="position:absolute;left:1361px;top:555px;width:44px;height:24px;background:#ecf5ff;border:1px solid #d9ecff;border-radius:4px"></div>
<div class="t" style="left:1361.0px;top:561.0px;font-size:12px;line-height:12px;height:12px;color:#409eff;width:44px;text-align:center">成功</div>
<div class="t" style="left:1536px;top:560.0px;font-size:14px;line-height:14px;height:14px;color:#606266">登录成功</div>
<div class="t" style="left:1689.0px;top:560.0px;font-size:14px;line-height:14px;height:14px;color:#606266;width:200px;text-align:center">2024-07-01 14:09:48</div>
<div style="position:absolute;left:241px;top:589.04px;width:1638px;height:41.38px;background:#fff;border-bottom:1px solid #ebeef5"></div>
<div style="position:absolute;left:262px;top:602px;width:14px;height:14px;border:1px solid #dcdfe6;border-radius:2px;background:#fff"></div>
<div class="t" style="left:308px;top:602.0px;font-size:14px;line-height:14px;height:14px;color:#606266">21516</div>
<div class="t" style="left:460.5px;top:602.0px;font-size:14px;line-height:14px;height:14px;color:#606266;width:200px;text-align:center">csadmin</div>
<div class="t" style="left:661px;top:602.0px;font-size:14px;line-height:14px;height:14px;color:#606266">175.168.64.158</div>
<div class="t" style="left:836px;top:602.0px;font-size:14px;line-height:14px;height:14px;color:#606266">XX XX</div>
<div class="t" style="left:1011px;top:602.0px;font-size:14px;line-height:14px;height:14px;color:#606266">Windows 10</div>
<div class="t" style="left:1186px;top:602.0px;font-size:14px;line-height:14px;height:14px;color:#606266">Chrome 11</div>
<div style="position:absolute;left:1361px;top:597px;width:44px;height:24px;background:#ecf5ff;border:1px solid #d9ecff;border-radius:4px"></div>
<div class="t" style="left:1361.0px;top:603.0px;font-size:12px;line-height:12px;height:12px;color:#409eff;width:44px;text-align:center">成功</div>
<div class="t" style="left:1536px;top:602.0px;font-size:14px;line-height:14px;height:14px;color:#606266">登录成功</div>
<div class="t" style="left:1689.0px;top:602.0px;font-size:14px;line-height:14px;height:14px;color:#606266;width:200px;text-align:center">2024-07-01 14:05:35</div>
<div style="position:absolute;left:241px;top:630.42px;width:1638px;height:41.38px;background:#fff;border-bottom:1px solid #ebeef5"></div>
<div style="position:absolute;left:262px;top:643px;width:14px;height:14px;border:1px solid #dcdfe6;border-radius:2px;background:#fff"></div>
<div class="t" style="left:308px;top:643.0px;font-size:14px;line-height:14px;height:14px;color:#606266">21515</div>
<div class="t" style="left:460.5px;top:643.0px;font-size:14px;line-height:14px;height:14px;color:#606266;width:200px;text-align:center">admin</div>
<div class="t" style="left:661px;top:643.0px;font-size:14px;line-height:14px;height:14px;color:#606266">36.7.129.38</div>
<div class="t" style="left:836px;top:643.0px;font-size:14px;line-height:14px;height:14px;color:#606266">XX XX</div>
<div class="t" style="left:1011px;top:643.0px;font-size:14px;line-height:14px;height:14px;color:#606266">Windows 10</div>
<div class="t" style="left:1186px;top:643.0px;font-size:14px;line-height:14px;height:14px;color:#606266">Chrome 12</div>
<div style="position:absolute;left:1361px;top:638px;width:44px;height:24px;background:#ecf5ff;border:1px solid #d9ecff;border-radius:4px"></div>
<div class="t" style="left:1361.0px;top:644.0px;font-size:12px;line-height:12px;height:12px;color:#409eff;width:44px;text-align:center">成功</div>
<div class="t" style="left:1536px;top:643.0px;font-size:14px;line-height:14px;height:14px;color:#606266">登录成功</div>
<div class="t" style="left:1689.0px;top:643.0px;font-size:14px;line-height:14px;height:14px;color:#606266;width:200px;text-align:center">2024-07-01 13:44:40</div>
<div class="t" style="left:1106px;top:721.0px;font-size:14px;line-height:14px;height:14px;color:#606266">共 1580 条</div>
<div style="position:absolute;left:1189px;top:712px;width:128px;height:32px;border:1px solid #dcdfe6;border-radius:4px;background:#fff"></div>
<div class="t" style="left:1219px;top:721.0px;font-size:14px;line-height:14px;height:14px;color:#606266">10条/页</div>
<svg style="left:1294px;top:725px" width="10" height="6" viewBox="0 0 10 6"><path d="M.5 .5L5 5l4.5-4.5" fill="none" stroke="#a8abb2" stroke-width="1.1"/></svg>
<div style="position:absolute;left:1333px;top:712px;width:32px;height:32px;border-radius:2px;background:#f0f2f5"></div>
<svg style="left:1345px;top:723px" width="6" height="10" viewBox="0 0 6 10"><path d="M5.5 .5L1 5l4.5 4.5" fill="none" stroke="#c0c4cc" stroke-width="1.1"/></svg>
<div style="position:absolute;left:1373px;top:712px;width:32px;height:32px;border-radius:2px;background:#409eff"></div>
<div class="t" style="left:1373.0px;top:721.0px;font-size:14px;line-height:14px;height:14px;color:#fff;font-weight:bold;width:32px;text-align:center">1</div>
<div style="position:absolute;left:1413px;top:712px;width:32px;height:32px;border-radius:2px;background:#f0f2f5"></div>
<div class="t" style="left:1413.0px;top:721.0px;font-size:14px;line-height:14px;height:14px;color:#303133;width:32px;text-align:center">2</div>
<div style="position:absolute;left:1453px;top:712px;width:32px;height:32px;border-radius:2px;background:#f0f2f5"></div>
<div class="t" style="left:1453.0px;top:721.0px;font-size:14px;line-height:14px;height:14px;color:#303133;width:32px;text-align:center">3</div>
<div style="position:absolute;left:1493px;top:712px;width:32px;height:32px;border-radius:2px;background:#f0f2f5"></div>
<div class="t" style="left:1493.0px;top:721.0px;font-size:14px;line-height:14px;height:14px;color:#303133;width:32px;text-align:center">4</div>
<div style="position:absolute;left:1533px;top:712px;width:32px;height:32px;border-radius:2px;background:#f0f2f5"></div>
<div class="t" style="left:1533.0px;top:721.0px;font-size:14px;line-height:14px;height:14px;color:#303133;width:32px;text-align:center">5</div>
<div style="position:absolute;left:1573px;top:712px;width:32px;height:32px;border-radius:2px;background:#f0f2f5"></div>
<div class="t" style="left:1573.0px;top:721.0px;font-size:14px;line-height:14px;height:14px;color:#303133;width:32px;text-align:center">6</div>
<div style="position:absolute;left:1613px;top:712px;width:32px;height:32px;border-radius:2px;background:#f0f2f5"></div>
<svg style="left:1622px;top:726px" width="14" height="4" viewBox="0 0 14 4"><circle cx="2" cy="2" r="1.6" fill="#303133"/><circle cx="7" cy="2" r="1.6" fill="#303133"/><circle cx="12" cy="2" r="1.6" fill="#303133"/></svg>
<div style="position:absolute;left:1653px;top:712px;width:32px;height:32px;border-radius:2px;background:#f0f2f5"></div>
<div class="t" style="left:1653.0px;top:721.0px;font-size:14px;line-height:14px;height:14px;color:#303133;width:32px;text-align:center">158</div>
<div style="position:absolute;left:1693px;top:712px;width:32px;height:32px;border-radius:2px;background:#f0f2f5"></div>
<svg style="left:1706px;top:723px" width="6" height="10" viewBox="0 0 6 10"><path d="M.5 .5L5 5 .5 9.5" fill="none" stroke="#303133" stroke-width="1.1"/></svg>
<div class="t" style="left:1745px;top:721.0px;font-size:14px;line-height:14px;height:14px;color:#606266">前往</div>
<div style="position:absolute;left:1781px;top:712px;width:56px;height:32px;border:1px solid #dcdfe6;border-radius:4px;background:#fff"></div>
<div class="t" style="left:1781.0px;top:721.0px;font-size:14px;line-height:14px;height:14px;color:#606266;width:56px;text-align:center">1</div>
<div class="t" style="left:1845px;top:721.0px;font-size:14px;line-height:14px;height:14px;color:#606266">页</div>
</body></html>
